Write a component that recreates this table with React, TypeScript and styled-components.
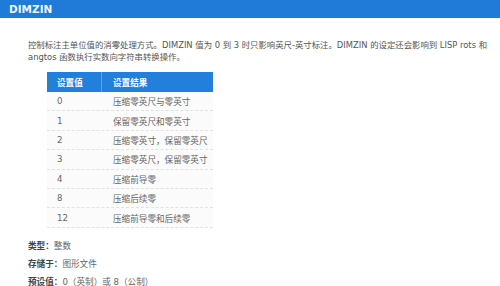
import styled, { createGlobalStyle } from "styled-components";

type Row = { value: string; result: string };

const rows: Row[] = [
  { value: "0", result: "压缩零英尺与零英寸" },
  { value: "1", result: "保留零英尺和零英寸" },
  { value: "2", result: "压缩零英寸，保留零英尺" },
  { value: "3", result: "压缩零英尺，保留零英寸" },
  { value: "4", result: "压缩前导零" },
  { value: "8", result: "压缩后续零" },
  { value: "12", result: "压缩前导零和后续零" },
];

const GlobalStyle = createGlobalStyle`
  body {
    margin: 0;
    background: #ffffff;
    font-family: "DejaVu Sans", "Noto Sans CJK SC", sans-serif;
  }
`;

const App = () => (
  <>
    <GlobalStyle />
    <Page>
      <TitleBar>DIMZIN</TitleBar>
      <Content>
        <Description>
          控制标注主单位值的消零处理方式。DIMZIN 值为 0 到 3 时只影响英尺-英寸标注。DIMZIN 的设定还会影响到 LISP rots 和
          <br />
          angtos 函数执行实数向字符串转换操作。
        </Description>
        <Table>
          <HeadRow>
            <HeadCell $first>设置值</HeadCell>
            <HeadCell>设置结果</HeadCell>
          </HeadRow>
          {rows.map((row) => (
            <BodyRow key={row.value}>
              <Cell>{row.value}</Cell>
              <Cell>{row.result}</Cell>
            </BodyRow>
          ))}
        </Table>
        <Props>
          <PropLine>
            <Label>类型：</Label>整数
          </PropLine>
          <PropLine>
            <Label>存储于：</Label>图形文件
          </PropLine>
          <PropLine>
            <Label>预设值：</Label>0（英制）或 8（公制）
          </PropLine>
        </Props>
      </Content>
    </Page>
  </>
);

export default App;

const Page = styled.div`
  width: 500px;
  height: 286px;
  overflow: hidden;
`;

const TitleBar = styled.div`
  height: 18px;
  line-height: 18px;
  padding-left: 9px;
  background: #1f7bd7;
  color: #eef5fc;
  font-family: "DejaVu Sans", sans-serif;
  font-weight: bold;
  font-size: 10.5px;
`;

const Content = styled.div`
  padding: 21px 0 0 28px;
`;

const Description = styled.p`
  margin: 0;
  white-space: nowrap;
  font-size: 8.4px;
  line-height: 12px;
  color: #555555;
`;

const Table = styled.div`
  margin: 9px 0 0 19px;
  width: 166px;
  display: flex;
  flex-direction: column;
`;

const HeadRow = styled.div`
  display: grid;
  grid-template-columns: 55px 1fr;
  height: 20px;
  background: #2280dc;
`;

const HeadCell = styled.div<{ $first?: boolean }>`
  display: flex;
  align-items: center;
  padding-left: ${(p) => (p.$first ? "10px" : "11px")};
  border-right: ${(p) => (p.$first ? "1px solid #5fa3e6" : "none")};
  color: #ffffff;
  font-weight: bold;
  font-size: 8.6px;
`;

const BodyRow = styled.div`
  display: grid;
  grid-template-columns: 55px 1fr;
  box-sizing: border-box;
  height: 19.4px;
  background: #fbfbfb;
  border-bottom: 1px dashed #e2e2e2;
`;

const Cell = styled.div`
  display: flex;
  align-items: center;
  padding-left: 10px;
  font-size: 8.6px;
  color: #666666;
  &:last-child {
    padding-left: 11px;
  }
`;

const Props = styled.div`
  margin-top: 9px;
  display: flex;
  flex-direction: column;
`;

const PropLine = styled.div`
  height: 18px;
  line-height: 18px;
  font-size: 8.6px;
  color: #666666;
`;

const Label = styled.span`
  font-weight: bold;
  color: #444444;
`;
